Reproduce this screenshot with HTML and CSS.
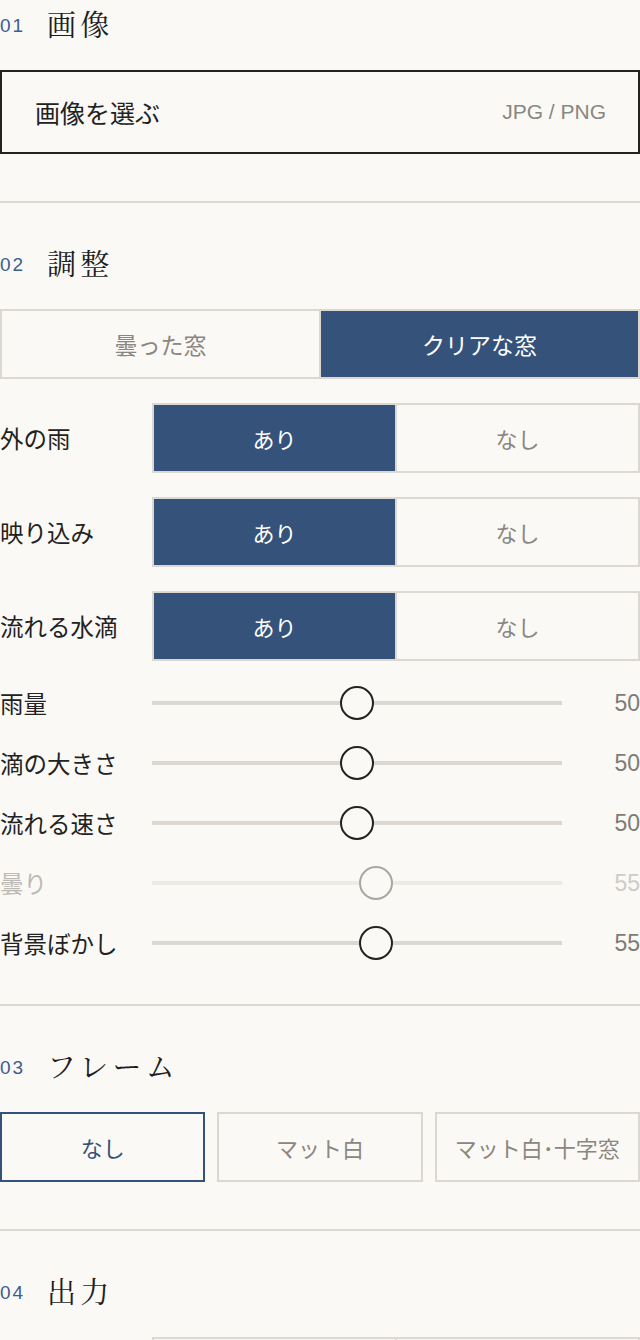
FILE: index.html
```html
<!DOCTYPE html>
<html lang="ja">
<head>
    <meta charset="UTF-8">
    <meta name="viewport" content="width=device-width, initial-scale=1.0">
    <title>雨の窓</title>
    <link rel="stylesheet" href="styles.css">
</head>
<body>

    <!-- 01 画像 -->
    <section class="panel first">
        <h2 class="panel-title"><span class="num">01</span><span class="name">画像</span></h2>
        <label class="file-box">
            <span>画像を選ぶ</span>
            <span class="file-hint">JPG / PNG</span>
        </label>
    </section>

    <!-- 02 調整 -->
    <section class="panel tight">
        <h2 class="panel-title"><span class="num">02</span><span class="name">調整</span></h2>

        <div class="segment">
            <button class="seg-btn">曇った窓</button>
            <button class="seg-btn active">クリアな窓</button>
        </div>

        <div class="rows">
            <div class="row">
                <span class="label">外の雨</span>
                <div class="toggle">
                    <button class="on">あり</button>
                    <button>なし</button>
                </div>
            </div>
            <div class="row">
                <span class="label">映り込み</span>
                <div class="toggle">
                    <button class="on">あり</button>
                    <button>なし</button>
                </div>
            </div>
            <div class="row">
                <span class="label">流れる水滴</span>
                <div class="toggle">
                    <button class="on">あり</button>
                    <button>なし</button>
                </div>
            </div>

            <div class="row slider-row">
                <span class="label">雨量</span>
                <input type="range" min="0" max="100" value="50">
                <span class="value">50</span>
            </div>
            <div class="row slider-row">
                <span class="label">滴の大きさ</span>
                <input type="range" min="0" max="100" value="50">
                <span class="value">50</span>
            </div>
            <div class="row slider-row">
                <span class="label">流れる速さ</span>
                <input type="range" min="0" max="100" value="50">
                <span class="value">50</span>
            </div>
            <div class="row slider-row disabled">
                <span class="label">曇り</span>
                <input type="range" min="0" max="100" value="55" disabled>
                <span class="value">55</span>
            </div>
            <div class="row slider-row">
                <span class="label">背景ぼかし</span>
                <input type="range" min="0" max="100" value="55">
                <span class="value">55</span>
            </div>
        </div>
    </section>

    <!-- 03 フレーム -->
    <section class="panel">
        <h2 class="panel-title"><span class="num">03</span><span class="name">フレーム</span></h2>
        <div class="frames">
            <button class="frame-btn active">なし</button>
            <button class="frame-btn">マット白</button>
            <button class="frame-btn">マット白･十字窓</button>
        </div>
    </section>

    <!-- 04 出力 -->
    <section class="panel">
        <h2 class="panel-title"><span class="num">04</span><span class="name">出力</span></h2>
        <div class="rows output">
            <div class="row">
                <span class="label">サイズ</span>
                <div class="toggle">
                    <button>原寸</button>
                    <button>縮小</button>
                </div>
            </div>
        </div>
    </section>

</body>
</html>
```

FILE: styles.css
```css
body {
    margin: 0;
    padding: 0;
    background-color: #faf9f6;
    color: #222222;
    font-family: "Liberation Sans", "Noto Sans CJK JP", sans-serif;
    font-size: 22px;
}

button {
    font-family: inherit;
    font-size: 22px;
    cursor: pointer;
}

.panel {
    padding: 36px 0 47px;
    border-bottom: 2px solid #dcd7d0;
}

.panel.first {
    padding-top: 0;
}

.panel.tight {
    padding-bottom: 43px;
}

.panel-title {
    display: flex;
    align-items: center;
    gap: 22px;
    height: 46px;
    margin: 0 0 24px;
    font-weight: normal;
}

.panel-title .num {
    font-size: 19px;
    letter-spacing: 0.1em;
    color: #3d5d8c;
    padding-top: 6px;
}

.panel-title .name {
    font-family: "Noto Serif CJK JP", "IPAMincho", "Liberation Serif", serif;
    font-size: 29px;
    letter-spacing: 0.15em;
    color: #1e1e1e;
}

/* ファイル選択 */
.file-box {
    display: flex;
    justify-content: space-between;
    align-items: center;
    height: 80px;
    padding: 0 32px 0 33px;
    border: 2px solid #222222;
    font-size: 25px;
    cursor: pointer;
}

.file-hint {
    font-size: 21px;
    color: #8a8680;
}

/* 曇った窓 / クリアな窓 */
.segment {
    display: flex;
    height: 66px;
    border: 2px solid #dcd7d0;
    margin-bottom: 24px;
}

.seg-btn {
    flex: 1;
    border: none;
    background: transparent;
    color: #8a8680;
    font-size: 23px;
}

.seg-btn + .seg-btn {
    border-left: 2px solid #dcd7d0;
}

.seg-btn.active {
    background-color: #34527a;
    color: #ffffff;
}

/* 行 */
.rows {
    display: flex;
    flex-direction: column;
    gap: 24px;
}

.rows.output {
    margin-top: 2px;
}

.row {
    display: flex;
    align-items: center;
}

.label {
    width: 152px;
    flex-shrink: 0;
    font-size: 23.5px;
}

.toggle {
    flex: 1;
    display: flex;
    height: 66px;
    border: 2px solid #dcd7d0;
}

.toggle button {
    flex: 1;
    border: none;
    background: transparent;
    color: #8a8680;
}

.toggle button + button {
    border-left: 2px solid #dcd7d0;
}

.toggle button.on {
    background-color: #34527a;
    color: #ffffff;
}

/* スライダー */
.slider-row {
    height: 36px;
}

.slider-row input[type=range] {
    -webkit-appearance: none;
    appearance: none;
    width: 410px;
    height: 36px;
    margin: 0;
    background: transparent;
}

.slider-row input[type=range]::-webkit-slider-runnable-track {
    height: 4px;
    background-color: #dcd7d0;
}

.slider-row input[type=range]::-webkit-slider-thumb {
    -webkit-appearance: none;
    width: 34px;
    height: 34px;
    margin-top: -15px;
    border-radius: 50%;
    border: 2px solid #222222;
    background-color: #faf9f6;
    box-sizing: border-box;
}

.value {
    flex: 1;
    text-align: right;
    font-size: 23px;
    color: #7f7a74;
}

.slider-row.disabled .label {
    color: #bdb9b3;
}

.slider-row.disabled .value {
    color: #cfcbc6;
}

.slider-row.disabled input[type=range]::-webkit-slider-runnable-track {
    background-color: #eeebe7;
}

.slider-row.disabled input[type=range]::-webkit-slider-thumb {
    border-color: #aaa7a2;
}

/* フレーム */
.frames {
    display: grid;
    grid-template-columns: repeat(3, 1fr);
    gap: 12px;
}

.frame-btn {
    height: 70px;
    padding: 0;
    border: 2px solid #dcd7d0;
    background: transparent;
    color: #8a8680;
    white-space: nowrap;
}

.frame-btn.active {
    border-color: #34527a;
    color: #34527a;
}
```
